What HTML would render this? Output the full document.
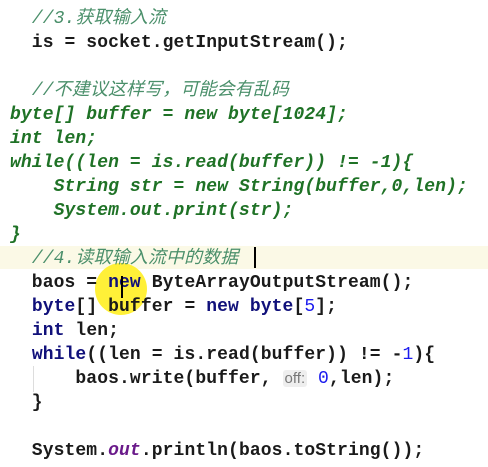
<!DOCTYPE html>
<html><head><meta charset="utf-8">
<style>
html,body{margin:0;padding:0;background:#fff;width:488px;height:467px;overflow:hidden;position:relative}
.code{position:absolute;left:10px;top:7px;font-family:"Liberation Mono","Noto Sans CJK SC",monospace;font-size:18px;line-height:24px;white-space:pre;color:#1a1a1a;font-weight:bold;letter-spacing:0.1px}
.l{height:24px;position:relative;z-index:2}
.c{color:#4a8f6a;font-style:italic;font-weight:normal}
.g{color:#1f7226;font-style:italic;font-weight:bold}
.k{color:#10107a;font-weight:bold}
.n{color:#1a1aee;font-weight:normal}
.o{color:#6a1a8a;font-style:italic}
.hint{font-family:"Liberation Sans",sans-serif;font-size:15px;color:#777;background:#eeeeee;font-weight:normal;padding:0 2px;border-radius:3px;letter-spacing:0}
.hl{position:absolute;left:0;top:246px;width:488px;height:23px;background:#fbf9e6;z-index:0}
.dot{position:absolute;left:95px;top:263px;width:52px;height:52px;border-radius:50%;background:#ffee22;opacity:.9;z-index:1}
.cur{position:absolute;left:254px;top:247px;width:2px;height:21px;background:#000;z-index:3}
.beam{position:absolute;left:121px;top:276px;width:2px;height:22px;background:#000;z-index:3}
.guide{position:absolute;left:33px;top:366px;width:1px;height:26px;background:#ddd}
</style></head><body>
<div class="hl"></div>
<div class="dot"></div>
<div class="cur"></div>
<div class="beam"></div>
<div class="guide"></div>
<div class="code"><div class="l">  <span class="c">//3.获取输入流</span></div><div class="l">  is = socket.getInputStream();</div><div class="l"> </div><div class="l">  <span class="c">//不建议这样写，可能会有乱码</span></div><div class="l"><span class="g">byte[] buffer = new byte[1024];</span></div><div class="l"><span class="g">int len;</span></div><div class="l"><span class="g">while((len = is.read(buffer)) != -1){</span></div><div class="l"><span class="g">    String str = new String(buffer,0,len);</span></div><div class="l"><span class="g">    System.out.print(str);</span></div><div class="l"><span class="g">}</span></div><div class="l">  <span class="c">//4.读取输入流中的数据</span></div><div class="l">  baos = <span class="k">new</span> ByteArrayOutputStream();</div><div class="l">  <span class="k">byte</span>[] buffer = <span class="k">new byte</span>[<span class="n">5</span>];</div><div class="l">  <span class="k">int</span> len;</div><div class="l">  <span class="k">while</span>((len = is.read(buffer)) != -<span class="n">1</span>){</div><div class="l">      baos.write(buffer, <span class="hint">off:</span> <span class="n">0</span>,len);</div><div class="l">  }</div><div class="l"> </div><div class="l">  System.<span class="o">out</span>.println(baos.toString());</div></div>
</body></html>
